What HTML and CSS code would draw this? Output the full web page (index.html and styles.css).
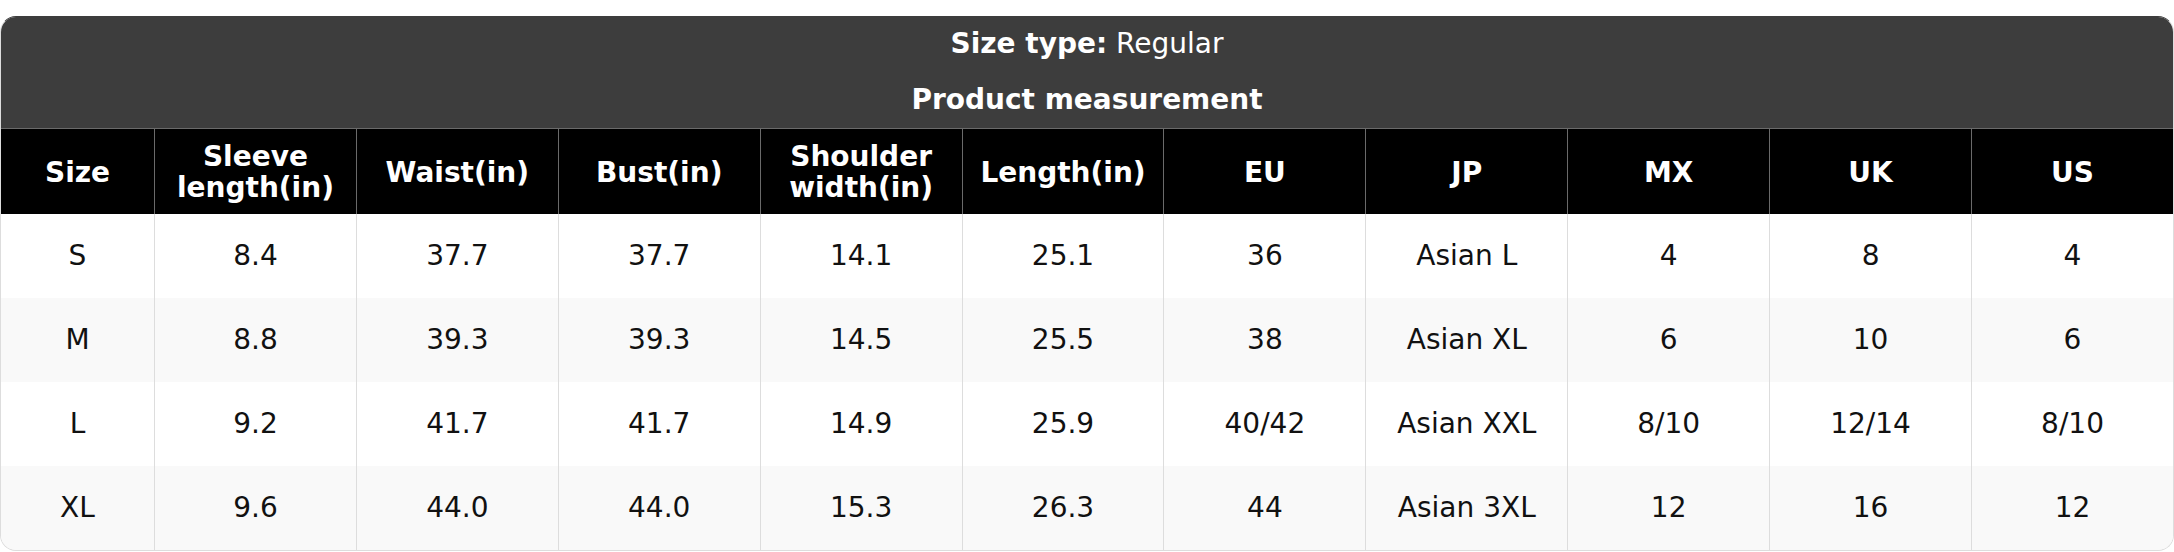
FILE: index.html
```html
<!DOCTYPE html>
<html lang="en">
<head>
<meta charset="utf-8">
<title>Size chart</title>
<link rel="stylesheet" href="styles.css">
</head>
<body>
<div class="chart">
  <div class="title"><b>Size type:</b> Regular</div>
  <div class="subtitle">Product measurement</div>
  <table class="grid">
    <colgroup>
      <col class="col-size">
      <col><col><col><col><col><col><col><col><col><col>
    </colgroup>
    <thead>
      <tr>
        <th>Size</th>
        <th>Sleeve length(in)</th>
        <th>Waist(in)</th>
        <th>Bust(in)</th>
        <th>Shoulder width(in)</th>
        <th>Length(in)</th>
        <th>EU</th>
        <th>JP</th>
        <th>MX</th>
        <th>UK</th>
        <th>US</th>
      </tr>
    </thead>
    <tbody>
      <tr><td>S</td><td>8.4</td><td>37.7</td><td>37.7</td><td>14.1</td><td>25.1</td><td>36</td><td>Asian L</td><td>4</td><td>8</td><td>4</td></tr>
      <tr><td>M</td><td>8.8</td><td>39.3</td><td>39.3</td><td>14.5</td><td>25.5</td><td>38</td><td>Asian XL</td><td>6</td><td>10</td><td>6</td></tr>
      <tr><td>L</td><td>9.2</td><td>41.7</td><td>41.7</td><td>14.9</td><td>25.9</td><td>40/42</td><td>Asian XXL</td><td>8/10</td><td>12/14</td><td>8/10</td></tr>
      <tr><td>XL</td><td>9.6</td><td>44.0</td><td>44.0</td><td>15.3</td><td>26.3</td><td>44</td><td>Asian 3XL</td><td>12</td><td>16</td><td>12</td></tr>
    </tbody>
  </table>
</div>
</body>
</html>
```

FILE: styles.css
```css
html, body {
  margin: 0;
  padding: 0;
  background: #ffffff;
}

body {
  padding-top: 16px;
  font-family: "DejaVu Sans", Verdana, sans-serif;
  font-size: 28px;
  color: #111111;
}

.chart {
  border: 1px solid #dddddd;
  border-top-color: #3d3d3d;
  border-radius: 16px;
  overflow: hidden;
  background: #ffffff;
}

.title,
.subtitle {
  background: #3d3d3d;
  color: #ffffff;
  text-align: center;
  height: 56px;
  line-height: 33px;
  padding-top: 11px;
  box-sizing: border-box;
}

.title b,
.subtitle {
  font-weight: bold;
}

.title {
  height: 55px;
  padding-top: 10px;
}

.grid {
  width: 100%;
  table-layout: fixed;
  border-collapse: separate;
  border-spacing: 0;
}

.col-size {
  width: 153px;
}

.grid th {
  background: #000000;
  color: #ffffff;
  font-weight: bold;
  line-height: 31px;
  padding: 12px 6px 11px;
  border-top: 1px solid #6a6a6a;
  border-left: 1px solid #6a6a6a;
  text-align: center;
  vertical-align: middle;
}

.grid td {
  line-height: 34px;
  padding: 25px 6px;
  border-left: 1px solid #dddddd;
  text-align: center;
  vertical-align: middle;
}

.grid th:first-child,
.grid td:first-child {
  border-left: none;
}

.grid tbody tr:nth-child(even) td {
  background: #f9f9f9;
}
```
